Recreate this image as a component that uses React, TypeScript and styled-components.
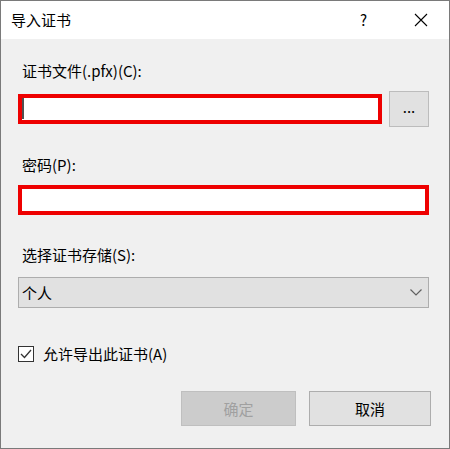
import React from "react";
import styled, { createGlobalStyle } from "styled-components";

const Global = createGlobalStyle`
  html, body { margin: 0; padding: 0; background: #f0f0f0; }
  * { box-sizing: border-box; }
`;

const FONT = `"Segoe UI", "Noto Sans CJK SC", sans-serif`;

const Window = styled.div`
  width: 450px;
  height: 449px;
  border: 1px solid #7a7a7a;
  display: flex;
  flex-direction: column;
  background: #f0f0f0;
  font-family: ${FONT};
  font-size: 15px;
  color: #000;
`;

const TitleBar = styled.div`
  height: 38px;
  background: #fff;
  display: flex;
  align-items: center;
  flex-shrink: 0;
`;

const Title = styled.div`
  flex: 1;
  padding-left: 10px;
  line-height: 20px;
  margin-top: -1px;
`;

const CaptionButton = styled.div`
  width: 57px;
  height: 38px;
  display: flex;
  align-items: center;
  justify-content: center;
  font-size: 15px;
  line-height: 20px;
`;

const Client = styled.div`
  flex: 1;
  display: flex;
  flex-direction: column;
  padding: 22px 20px 0 17px;
`;

const Label = styled.div<{ $mt?: number }>`
  padding-left: 4px;
  line-height: 20px;
  height: 20px;
  margin-top: ${(p) => p.$mt ?? 0}px;
`;

const Row = styled.div<{ $mt?: number }>`
  display: flex;
  align-items: center;
  margin-top: ${(p) => p.$mt ?? 0}px;
`;

const RedInput = styled.div`
  flex: 1;
  height: 30px;
  border: 4px solid #ee0000;
  background: #fff;
  display: flex;
`;

const Caret = styled.div`
  width: 2px;
  height: 21px;
  background: #505050;
`;

const BrowseButton = styled.div`
  width: 40px;
  height: 36px;
  margin-left: 7px;
  border: 1px solid #bcbcbc;
  background: #e1e1e1;
  display: flex;
  align-items: center;
  justify-content: center;
  line-height: 20px;
  padding-bottom: 4px;
`;

const Select = styled.div<{ $mt?: number }>`
  height: 31px;
  margin-top: ${(p) => p.$mt ?? 0}px;
  border: 1px solid #adadad;
  background: #e1e1e1;
  display: flex;
  align-items: center;
  justify-content: space-between;
  padding: 0 6px 0 3px;
  line-height: 20px;
`;

const CheckRow = styled.label`
  display: flex;
  align-items: center;
  height: 20px;
  margin-top: 36px;
  line-height: 20px;
`;

const CheckBox = styled.div`
  width: 16px;
  height: 16px;
  border: 1px solid #333;
  background: #fff;
  margin-right: 9px;
  display: flex;
  align-items: center;
  justify-content: center;
`;

const ButtonRow = styled.div`
  display: flex;
  justify-content: flex-end;
  gap: 13px;
  margin-top: 27px;
  margin-right: -2px;
`;

const DialogButton = styled.div<{ $disabled?: boolean; $w: number }>`
  width: ${(p) => p.$w}px;
  height: 35px;
  border: 1px solid ${(p) => (p.$disabled ? "#bfbfbf" : "#adadad")};
  background: ${(p) => (p.$disabled ? "#cccccc" : "#e1e1e1")};
  color: ${(p) => (p.$disabled ? "#a0a0a0" : "#000")};
  display: flex;
  align-items: center;
  justify-content: center;
  line-height: 20px;
`;

export default function App() {
  return (
    <>
      <Global />
      <Window>
        <TitleBar>
          <Title>导入证书</Title>
          <CaptionButton>?</CaptionButton>
          <CaptionButton>
            <svg width="14" height="14" viewBox="0 0 14 14">
              <path d="M1 1 L13 13 M13 1 L1 13" stroke="#000" strokeWidth="1.1" fill="none" />
            </svg>
          </CaptionButton>
        </TitleBar>
        <Client>
          <Label>证书文件(.pfx)(C):</Label>
          <Row $mt={10}>
            <RedInput>
              <Caret />
            </RedInput>
            <BrowseButton>...</BrowseButton>
          </Row>
          <Label $mt={28}>密码(P):</Label>
          <Row $mt={10}>
            <RedInput />
          </Row>
          <Label $mt={30}>选择证书存储(S):</Label>
          <Select $mt={12}>
            <span>个人</span>
            <svg width="12" height="7" viewBox="0 0 12 7">
              <polyline points="0.5,0.5 6,6 11.5,0.5" stroke="#606060" strokeWidth="1.2" fill="none" />
            </svg>
          </Select>
          <CheckRow>
            <CheckBox>
              <svg width="14" height="14" viewBox="0 0 14 14">
                <polyline points="2,7 5.5,10.5 12,3" stroke="#333" strokeWidth="1.3" fill="none" />
              </svg>
            </CheckBox>
            允许导出此证书(A)
          </CheckRow>
          <ButtonRow>
            <DialogButton $disabled $w={115}>确定</DialogButton>
            <DialogButton $w={122}>取消</DialogButton>
          </ButtonRow>
        </Client>
      </Window>
    </>
  );
}
